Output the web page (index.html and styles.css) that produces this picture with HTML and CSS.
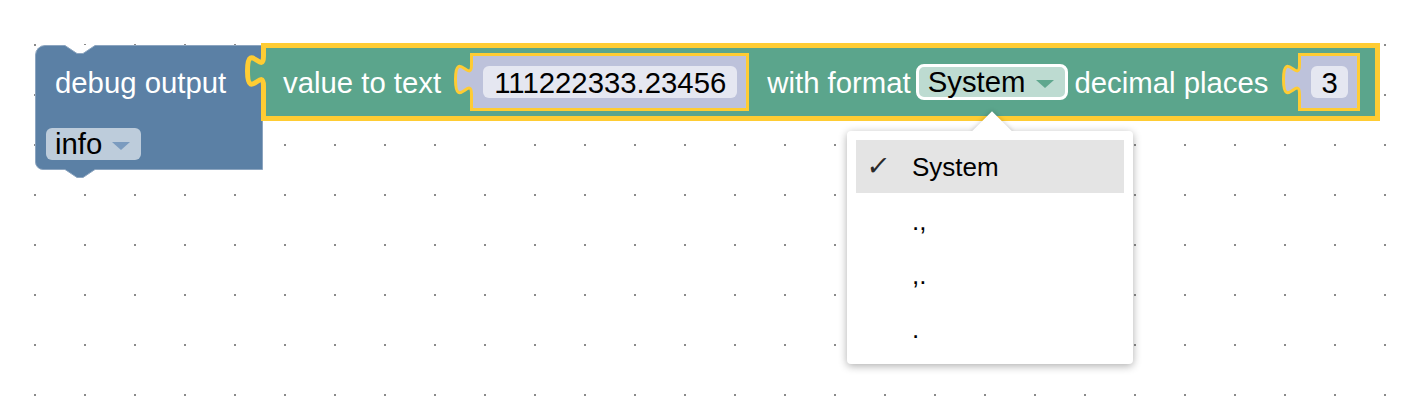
FILE: index.html
```html
<!DOCTYPE html>
<html lang="en">
<head>
<meta charset="utf-8">
<title>Blockly workspace</title>
<link rel="stylesheet" href="styles.css">
</head>
<body>
<div class="workspace">
  <div class="stack">
    <div class="block-debug">
      <svg class="notch-top" width="34" height="12" viewBox="0 0 34 12">
        <path d="M2,1 L2,1.5 L14,9.5 L20,9.5 L32,1.5 L32,1 Z" fill="#ffffff"/>
        <path d="M2,1.5 L14,9.5 L20,9.5 L32,1.5" fill="none" stroke="#8ca5c0" stroke-width="1"/>
      </svg>
      <div class="debug-row1"><span class="label">debug output</span></div>
      <div class="debug-row2">
        <span class="dropdown dropdown-blue">info<span class="arrow"></span></span>
      </div>
      <svg class="notch-bottom" width="34" height="12" viewBox="0 0 34 12">
        <path d="M2,1 L32,1 L32,2.5 L20,10.5 L14,10.5 L2,2.5 Z" fill="#5b80a5"/>
        <path d="M2,2.5 L14,10.5 L20,10.5 L32,2.5" fill="none" stroke="#8ca5c0" stroke-width="1"/>
      </svg>
    </div>
    <div class="block-text">
      <svg class="tab-lg" width="25" height="45" viewBox="0 0 25 45">
        <path d="M25,8 L21.5,8 c0,20 -16,-16 -16,15 s16,-5 16,15 L25,38 Z" fill="#5ba58c"/>
        <path d="M21.5,5 L21.5,8 c0,20 -16,-16 -16,15 s16,-5 16,15 L21.5,41" fill="none" stroke="#ffcc33" stroke-width="5"/>
      </svg>
      <span class="label">value to text</span>
      <div class="block-num num-first">
        <svg class="tab-sm" width="21" height="42" viewBox="0 0 21 42">
          <path d="M21,8.5 L18.5,8.5 c0,20 -16,-16 -16,15 s16,-5 16,15 L21,38.5 Z" fill="#bdc2db"/>
          <path d="M18.5,6 L18.5,8.5 c0,20 -16,-16 -16,15 s16,-5 16,15 L18.5,41" fill="none" stroke="#ffcc33" stroke-width="3"/>
        </svg>
        <span class="num-field">111222333.23456</span>
      </div>
      <span class="label lbl-format">with format</span>
      <span class="dropdown dropdown-green">System<span class="arrow"></span></span>
      <span class="label lbl-decimal">decimal places</span>
      <div class="block-num num-last">
        <svg class="tab-sm" width="21" height="42" viewBox="0 0 21 42">
          <path d="M21,8.5 L18.5,8.5 c0,20 -16,-16 -16,15 s16,-5 16,15 L21,38.5 Z" fill="#bdc2db"/>
          <path d="M18.5,6 L18.5,8.5 c0,20 -16,-16 -16,15 s16,-5 16,15 L18.5,41" fill="none" stroke="#ffcc33" stroke-width="3"/>
        </svg>
        <span class="num-field num-short">3</span>
      </div>
    </div>
  </div>

  <div class="menu">
    <div class="menu-item selected"><span class="check">✓</span>System</div>
    <div class="menu-item">.,</div>
    <div class="menu-item">,.</div>
    <div class="menu-item">.</div>
  </div>
  <div class="menu-arrow-wrap"><div class="menu-arrow"></div></div>
</div>
</body>
</html>
```

FILE: styles.css
```css
* {
  box-sizing: border-box;
}

html,
body {
  margin: 0;
  padding: 0;
  background: #ffffff;
}

body {
  font-family: "Liberation Sans", Arial, sans-serif;
}

.workspace {
  position: relative;
  width: 1408px;
  height: 402px;
  overflow: hidden;
  background-color: #ffffff;
  background-image: radial-gradient(circle at 1px 1px, #8a8a8a 0.9px, rgba(138, 138, 138, 0) 1.3px);
  background-size: 50px 50px;
  background-position: 34px 44px;
}

/* block stack placed on the canvas */
.stack {
  position: absolute;
  left: 35px;
  top: 43px;
  display: flex;
  align-items: flex-start;
}

.label {
  color: #ffffff;
  font-size: 29.33px;
  white-space: nowrap;
  flex: none;
  position: relative;
  top: 1px;
}

/* debug output block */
.block-debug {
  position: relative;
  flex: none;
  width: 228px;
  height: 125px;
  margin-top: 2px;
  background: #5b80a5;
  border: 1px solid #8ca5c0;
  border-radius: 10px 0 0 8px;
}

.notch-top {
  position: absolute;
  left: 27px;
  top: -2px;
}

.notch-bottom {
  position: absolute;
  left: 27px;
  bottom: -10px;
}

.debug-row1 {
  height: 72px;
  display: flex;
  align-items: center;
  padding-left: 19px;
}

.debug-row2 {
  margin-top: 10px;
  padding-left: 10px;
  display: flex;
}

/* dropdown fields */
.dropdown {
  display: flex;
  align-items: center;
  gap: 10px;
  flex: none;
  height: 32px;
  padding: 0 11px 0 9px;
  border-radius: 6px;
  color: #000000;
  font-size: 29.33px;
  white-space: nowrap;
}

.dropdown-blue {
  background: #bdccdb;
}

.dropdown-green {
  height: 36px;
  margin-left: 5px;
  padding: 0 11px 0 9px;
  border: 3px solid #ffffff;
  border-radius: 8px;
  background: #bddbd1;
}

.arrow {
  width: 0;
  height: 0;
  margin-top: 4px;
  border-left: 9px solid transparent;
  border-right: 9px solid transparent;
  border-top: 8px solid #7b9bbf;
}

.dropdown-green .arrow {
  border-top-color: #5fa78e;
}

/* value to text block */
.block-text {
  position: relative;
  flex: none;
  display: flex;
  align-items: center;
  height: 78px;
  margin-left: -2px;
  padding: 0 15px 0 17px;
  background: #5ba58c;
  border: 5px solid #ffcc33;
}

.tab-lg {
  position: absolute;
  left: -24px;
  top: 0;
  overflow: visible;
}

.lbl-format {
  margin-left: 18px;
}

.lbl-decimal {
  margin-left: 7px;
}

/* number shadow blocks */
.block-num {
  position: relative;
  flex: none;
  display: flex;
  align-items: center;
  height: 58px;
  padding: 0 9px 0 10px;
  background: #bdc2db;
  border: 3px solid #ffcc33;
}

.num-first {
  margin-left: 29px;
}

.num-last {
  margin-left: 30px;
}

.tab-sm {
  position: absolute;
  left: -20px;
  top: 0;
  overflow: visible;
}

.num-field {
  height: 32px;
  line-height: 33px;
  padding: 0 11px;
  border-radius: 6px;
  background: #e5e7f1;
  color: #000000;
  font-size: 29.33px;
  white-space: nowrap;
}

.num-short {
  padding: 0 10px;
}

/* dropdown menu */
.menu {
  position: absolute;
  left: 847px;
  top: 131px;
  width: 286px;
  padding: 9px 9px 9px;
  background: #ffffff;
  border-radius: 4px;
  box-shadow: 0 2px 8px rgba(0, 0, 0, 0.32);
  font-size: 26px;
  color: #000000;
}

.menu-item {
  position: relative;
  display: flex;
  align-items: center;
  height: 54px;
  padding-left: 56px;
  padding-top: 2px;
  white-space: nowrap;
}

.menu-item.selected {
  height: 53px;
  padding-top: 1px;
  background: #e4e4e4;
}

.check {
  position: absolute;
  left: 11px;
  top: 10px;
  font-family: "DejaVu Sans", sans-serif;
  font-size: 27px;
  color: #2a2a2a;
  transform: skewX(-8deg);
}

.menu-arrow-wrap {
  position: absolute;
  left: 967px;
  top: 106px;
  width: 50px;
  height: 25px;
  overflow: hidden;
}

.menu-arrow {
  position: absolute;
  left: 11px;
  top: 11px;
  width: 28px;
  height: 28px;
  background: #ffffff;
  transform: rotate(45deg);
  box-shadow: 0 0 5px rgba(0, 0, 0, 0.22);
}
```
